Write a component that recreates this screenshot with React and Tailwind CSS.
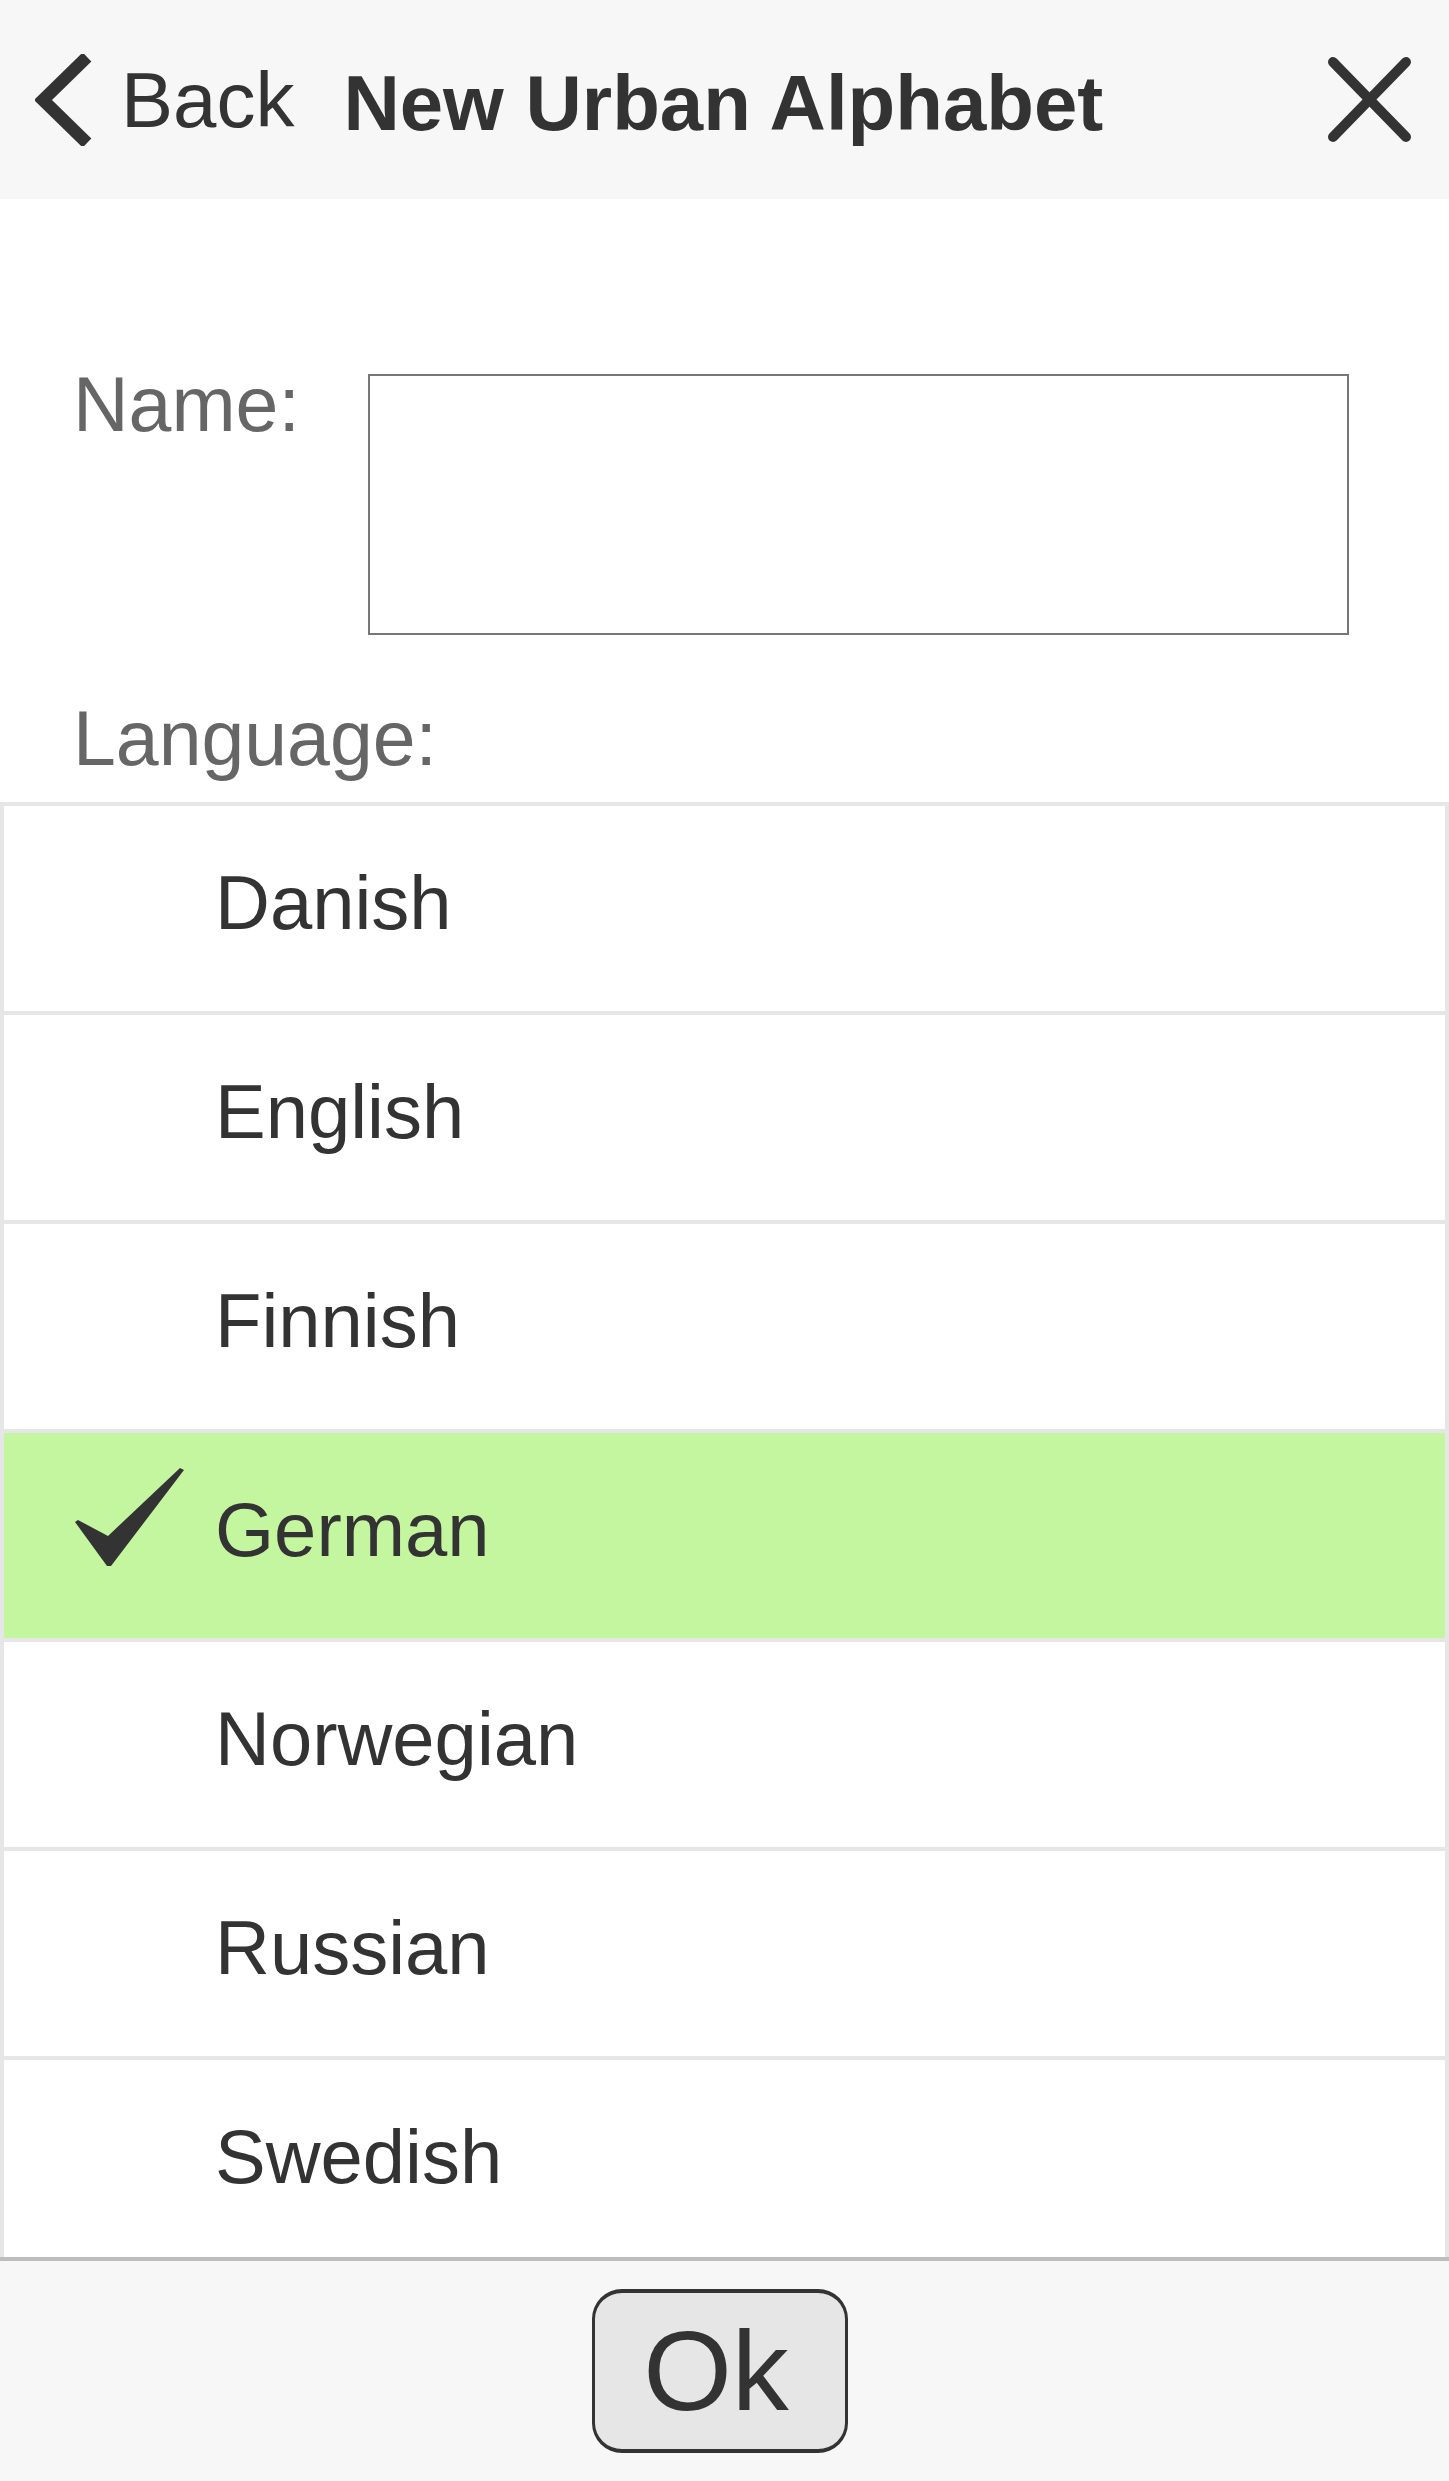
import React from "react";

const LANGUAGES = ["Danish", "English", "Finnish", "German", "Norwegian", "Russian", "Swedish"];
const SELECTED = "German";

function Chevron() {
  return (
    <svg width="57" height="92" viewBox="0 0 57 92" className="block">
      <polyline points="52,3 8,46 52,89" fill="none" stroke="#333" strokeWidth="12.5" strokeLinejoin="miter" strokeMiterlimit="10" />
    </svg>
  );
}

function CloseIcon() {
  return (
    <svg width="83" height="85" viewBox="0 0 83 85" className="block">
      <line x1="5" y1="5" x2="78" y2="80" stroke="#333" strokeWidth="10" strokeLinecap="round" />
      <line x1="78" y1="5" x2="5" y2="80" stroke="#333" strokeWidth="10" strokeLinecap="round" />
    </svg>
  );
}

function Check() {
  return (
    <svg width="110" height="100" viewBox="0 0 110 100" className="block">
      <polygon points="0,55 3,53 33,69 105,1 109,3 36,99 32,99" fill="#333" />
    </svg>
  );
}

function LanguageRow({ name, selected }) {
  return (
    <div className={`flex items-start h-[209px] shrink-0 border-x-4 border-t-4 border-[#e6e6e6] ${selected ? "bg-[#c4f69f]" : "bg-white"}`}>
      <div className="w-[211px] shrink-0 pl-[71px]">
        {selected && <div className="mt-[34px]"><Check /></div>}
      </div>
      <span className="mt-[59px] text-[76px] leading-none text-[#333]">{name}</span>
    </div>
  );
}

export default function App() {
  return (
    <div className="h-[2481px] w-[1449px] flex flex-col bg-white overflow-hidden" style={{ fontFamily: '"Liberation Sans", Arial, sans-serif' }}>
      {/* header */}
      <div className="h-[199px] shrink-0 flex items-start bg-[#f7f7f7]">
        <div className="ml-[35px] mt-[54px]"><Chevron /></div>
        <span className="ml-[29px] mt-[61px] text-[78px] leading-none text-[#333]">Back</span>
        <span className="ml-[49px] mt-[64px] text-[78px] leading-none font-bold text-[#333]">New Urban Alphabet</span>
        <div className="ml-auto mr-[38px] mt-[57px]"><CloseIcon /></div>
      </div>

      {/* form */}
      <div className="shrink-0 pl-[73px] pt-[167px]">
        <div className="flex items-start">
          <span className="text-[77px] leading-none text-[#666]">Name:</span>
          <div className="ml-auto mr-[100px] mt-[8px] w-[981px] h-[261px] border-2 border-[#777] bg-white" />
        </div>
        <div className="mt-[65px] text-[77px] leading-none text-[#666]">Language:</div>
      </div>

      {/* list */}
      <div className="mt-[25px] h-[1455px] shrink-0 flex flex-col overflow-hidden">
        {LANGUAGES.map((l) => (
          <LanguageRow key={l} name={l} selected={l === SELECTED} />
        ))}
      </div>

      {/* footer */}
      <div className="flex-1 flex items-center justify-center pr-[9px] border-t-4 border-[#bdbdbd] bg-[#f7f7f7]">
        <button className="w-[256px] h-[164px] flex items-center justify-center pr-[8px] rounded-[30px] border-x-[3px] border-y-4 border-[#333] bg-[#e6e6e6] text-[114px] leading-none text-[#333]">
          Ok
        </button>
      </div>
    </div>
  );
}
